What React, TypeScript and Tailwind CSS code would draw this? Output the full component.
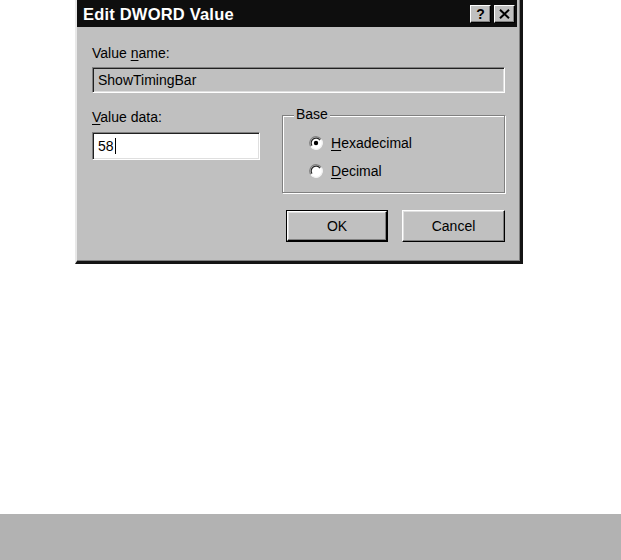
import React from "react";

const font = { fontFamily: '"Liberation Sans", Arial, sans-serif' };

function TitleButton({ children }: { children: React.ReactNode }) {
    return (
        <div className="w-[21px] h-[18px] bg-[#c0c0c0] border border-t-white border-l-white border-r-black border-b-black shadow-[inset_-1px_-1px_0_#808080] flex items-center justify-center">
            {children}
        </div>
    );
}

function Radio({ checked, label, mnemonic }: { checked?: boolean; label: string; mnemonic: string }) {
    return (
        <div className="flex items-center h-[28px]">
            <svg width="14" height="14" viewBox="0 0 14 14" className="ml-[26px] mr-[8px]">
                <circle cx="7" cy="7" r="6.5" fill="#ffffff" />
                <path d="M12.2 3.5 A6 6 0 0 0 1.8 10.5" stroke="#808080" strokeWidth="1.3" fill="none" />
                <path d="M10.9 4.2 A4.6 4.6 0 0 0 3 9.6" stroke="#202020" strokeWidth="1.2" fill="none" />
                <path d="M1.8 10.5 A6 6 0 0 0 12.2 3.5" stroke="#f2f2f2" strokeWidth="1.3" fill="none" />
                {checked && <circle cx="7" cy="7" r="2.2" fill="#000000" />}
            </svg>
            <span className="text-[14px] leading-[16px] text-black">
                <span className="underline underline-offset-2">{mnemonic}</span>
                {label}
            </span>
        </div>
    );
}

function Button({ children, primary }: { children: React.ReactNode; primary?: boolean }) {
    return (
        <div className={primary ? "w-[102px] h-[32px] border border-black" : "w-[103px] h-[32px]"}>
            <div className="w-full h-full bg-[#c0c0c0] border border-t-white border-l-white border-r-black border-b-black shadow-[inset_-1px_-1px_0_#808080,inset_1px_1px_0_#dfdfdf] flex items-center justify-center text-[14px] text-black">
                {children}
            </div>
        </div>
    );
}

export default function App() {
    return (
        <div className="w-[621px] h-[560px] bg-white flex flex-col" style={font}>
            <div className="h-[514px]">
                <div className="ml-[75px] w-[448px] h-[264px] bg-[#c0c0c0] border-l-2 border-l-[#e8e8e8] border-r-[3px] border-r-[#141414] border-b-[3px] border-b-[#141414] shadow-[inset_-1px_-1px_0_#808080] flex flex-col">
                    {/* title bar */}
                    <div className="w-[440px] h-[27px] bg-[#0e0e0e] flex items-center pl-[6px] pr-[2px]">
                        <span className="text-white font-bold text-[16.5px] leading-[18px] tracking-[0.2px] flex-1">Edit DWORD Value</span>
                        <div className="flex gap-[3px]">
                            <TitleButton>
                                <span className="font-bold text-[14px] leading-[14px] text-black">?</span>
                            </TitleButton>
                            <TitleButton>
                                <svg width="11" height="10" viewBox="0 0 11 10">
                                    <path d="M1 0.8 L10 9.2 M10 0.8 L1 9.2" stroke="#000" strokeWidth="2" />
                                </svg>
                            </TitleButton>
                        </div>
                    </div>

                    <div className="px-[15px] flex flex-col">
                        <div className="mt-[18px] text-[14px] leading-[16px] text-black">
                            Value <span className="underline underline-offset-2">n</span>ame:
                        </div>
                        <div className="mt-[6px] h-[26px] border border-t-[#808080] border-l-[#808080] border-r-white border-b-white shadow-[inset_1px_1px_0_#202020,inset_-1px_-1px_0_#dfdfdf] flex items-center pl-[5px] text-[14px] text-black">
                            ShowTimingBar
                        </div>

                        <div className="flex items-start">
                            <div className="w-[168px] mt-[16px] flex flex-col">
                                <div className="text-[14px] leading-[16px] text-black">
                                    <span className="underline underline-offset-2">V</span>alue data:
                                </div>
                                <div className="mt-[7px] h-[28px] bg-white border border-t-[#808080] border-l-[#808080] border-r-white border-b-white shadow-[inset_1px_1px_0_#202020,inset_-1px_-1px_0_#dfdfdf] flex items-center pl-[5px] text-[14px] text-black">
                                    58<span className="w-[1px] h-[16px] bg-black ml-[1px]" />
                                </div>
                            </div>

                            <div className="relative ml-[22px] mt-[22px] w-[223px] h-[78px] border border-[#808080] shadow-[inset_1px_1px_0_#fff,1px_1px_0_#fff] flex flex-col pt-[13px]">
                                <span className="absolute left-[11px] top-[-10px] px-[2px] bg-[#c0c0c0] text-[14px] leading-[16px] text-black">Base</span>
                                <Radio checked mnemonic="H" label="exadecimal" />
                                <Radio mnemonic="D" label="ecimal" />
                            </div>
                        </div>

                        <div className="mt-[17px] flex justify-end gap-[14px]">
                            <Button primary>OK</Button>
                            <Button>Cancel</Button>
                        </div>
                    </div>
                </div>
            </div>
            <div className="h-[46px] bg-[#b2b2b2]" />
        </div>
    );
}
